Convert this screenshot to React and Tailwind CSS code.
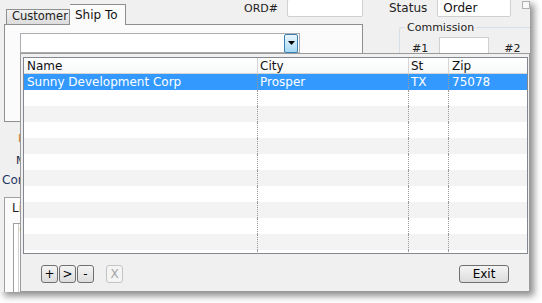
import React from "react";

const cols = [
  { w: "w-[234px]", pl: "pl-[3px]" },
  { w: "w-[151px]", pl: "pl-[2px]" },
  { w: "w-[40px]", pl: "pl-[2px]" },
];

function Row({ cells, cls, text }) {
  return (
    <div className={`flex h-[16px] shrink-0 ${cls}`}>
      {cols.map((c, i) => (
        <div
          key={i}
          className={`${c.w} ${c.pl} shrink-0 h-full flex items-center border-r border-dotted border-[#9a9a9a] ${text}`}
        >
          {cells[i]}
        </div>
      ))}
      <div className={`flex-1 pl-[3px] h-full flex items-center ${text}`}>{cells[3]}</div>
    </div>
  );
}

function Btn({ children, w = "w-[17px]", disabled = false, cls = "" }) {
  return (
    <div
      className={`${w} h-[18px] rounded-[3px] border flex items-center justify-center text-[12px] ${
        disabled
          ? "border-[#c4c4c4] bg-[#f4f4f4] text-[#a6a6a6]"
          : "border-[#707070] bg-gradient-to-b from-[#f4f4f4] to-[#dcdcdc] text-black"
      } ${cls}`}
    >
      {children}
    </div>
  );
}

export default function App() {
  const rows = Array.from({ length: 11 });
  return (
    <div className="w-[542px] h-[303px] bg-white overflow-hidden font-['DejaVu_Sans',sans-serif] text-[12px] leading-none text-black">
      <div className="relative w-[530px] h-[292px] bg-[#f0f0f0] shadow-[4px_4px_7px_rgba(0,0,0,0.45)]">
        <div className="w-full h-full overflow-hidden flex flex-col">
          {/* top section */}
          <div className="flex shrink-0">
            {/* left: tabs + panel */}
            <div className="ml-[4px] w-[359px] flex flex-col shrink-0">
              <div className="h-[24px] flex items-start">
                <div className="flex items-end h-full ml-[2px]">
                  <div className="w-[64px] h-[15px] border border-b-0 border-[#8e8f8f] bg-gradient-to-b from-[#f2f2f2] to-[#dcdcdc] flex items-center pl-[5px] text-[11.5px] text-[#222]">
                    Customer
                  </div>
                  <div className="relative z-10 -mb-[1px] w-[56px] h-[21px] border border-b-0 border-l-0 border-[#8e8f8f] bg-[#fbfbfb] flex items-start pt-[4px] pl-[5px] text-[12px] text-[#111]">
                    Ship To
                  </div>
                </div>
                <div className="ml-auto mt-[3px] mr-[9px] text-[11px] text-[#222]">ORD#</div>
                <div className="-mt-[1px] w-[76px] h-[18px] border border-[#d0d0d0] bg-white rounded-[2px]"></div>
              </div>
              <div className="h-[98px] border border-[#8e8f8f] bg-[#fbfbfb] pl-[15px] pt-[8px]">
                <div className="w-[280px] h-[20px] border border-[#abadb3] bg-white flex justify-end items-center pr-[1px]">
                  <div className="w-[14px] h-[19px] rounded-[2px] border border-[#3c7fb1] bg-gradient-to-b from-[#eaf6fd] to-[#a7d9f5] flex items-center justify-center">
                    <svg width="7" height="4" viewBox="0 0 7 4">
                      <path d="M0 0H7L3.5 4Z" fill="#000" />
                    </svg>
                  </div>
                </div>
              </div>
            </div>
            {/* right: status + commission */}
            <div className="flex flex-col flex-1 min-w-0">
              <div className="flex items-start h-[17px]">
                <div className="ml-[26px] mt-[2px] text-[12px] text-[#222]">Status</div>
                <div className="ml-[10px] -mt-[1px] w-[80px] h-[18px] border border-[#d0d0d0] bg-white pl-[5px] pt-[2px] text-[12px] text-[#111] rounded-[2px]">
                  Order
                </div>
                <div className="ml-[11px] mt-[1px] w-[8px] h-[8px] border border-[#b0b0b0] bg-[#f8f8f8]"></div>
              </div>
              <fieldset className="ml-[36px] mt-[5px] border-l border-t border-[#d5dfe5] rounded-tl-[3px] h-[100px]">
                <legend className="ml-[5px] px-[2px] text-[11px] text-[#222]">Commission</legend>
                <div className="flex items-start mt-[4px] pl-[12px]">
                  <div className="mt-[6px] text-[11px] text-[#222]">#1</div>
                  <div className="ml-[11px] w-[50px] h-[18px] border border-[#d0d0d0] bg-white"></div>
                  <div className="ml-[15px] mt-[6px] text-[11px] text-[#222]">#2</div>
                  <div className="ml-[10px] w-[50px] h-[18px] border border-[#d0d0d0] bg-white"></div>
                </div>
              </fieldset>
            </div>
          </div>
          {/* left labels */}
          <div className="flex flex-col shrink-0 h-[75px] pt-[11px]">
            <div className="ml-[18px] text-[11px] text-[#c97a2c]">Invoice</div>
            <div className="ml-[16px] mt-[11px] text-[11px] text-[#1a2a4a]">Memo</div>
            <div className="ml-[2px] mt-[8px] text-[12px] text-[#1f3564]">Comments</div>
          </div>
          {/* lower group */}
          <div className="ml-[4px] flex-1 border-l border-t border-[#a0a0a0] bg-[#fbfbfb] pl-[7px] pt-[4px]">
            <div className="text-[12px] text-[#222]">Line Items</div>
            <div className="mt-[9px] ml-[1px] h-[80px] border-l border-t border-[#a0a0a0] bg-white pl-[4px]">
              <div className="h-full border-l border-[#d0d0d0] pt-[4px] text-[10px] text-[#555]">'</div>
            </div>
          </div>
        </div>

        {/* dialog overlay */}
        <div className="absolute left-[20px] top-[53px] right-0 bottom-0 border border-[#9a9a9a] bg-[#f0f0f0] pl-[2px] pt-[3px] pr-[1px] flex flex-col">
          <div className="h-[197px] shrink-0 border border-[#828790] bg-white overflow-hidden flex flex-col">
            <div className="flex h-[16px] shrink-0 bg-gradient-to-b from-white to-[#f7f8f9] border-b border-[#d5d5d5]">
              {["Name", "City", "St"].map((t, i) => (
                <div
                  key={t}
                  className={`${cols[i].w} ${cols[i].pl} shrink-0 h-full flex items-center border-r border-[#d5d5d5] text-[#111]`}
                >
                  {t}
                </div>
              ))}
              <div className="flex-1 pl-[3px] h-full flex items-center text-[#111]">Zip</div>
            </div>
            <Row
              cells={["Sunny Development Corp", "Prosper", "TX", "75078"]}
              cls="bg-[#3399ff]"
              text="text-white"
            />
            {rows.map((_, i) => (
              <Row
                key={i}
                cells={["", "", "", ""]}
                cls={i % 2 === 0 ? "bg-white" : "bg-[#f3f3f3]"}
                text=""
              />
            ))}
          </div>
          <div className="flex items-start pt-[11px]">
            <div className="ml-[18px] flex gap-[1px]">
              <Btn>+</Btn>
              <Btn>&gt;</Btn>
              <Btn>-</Btn>
            </div>
            <Btn disabled cls="ml-[12px]">X</Btn>
            <Btn w="w-[50px]" cls="ml-auto mr-[19px]">Exit</Btn>
          </div>
        </div>
      </div>
    </div>
  );
}
